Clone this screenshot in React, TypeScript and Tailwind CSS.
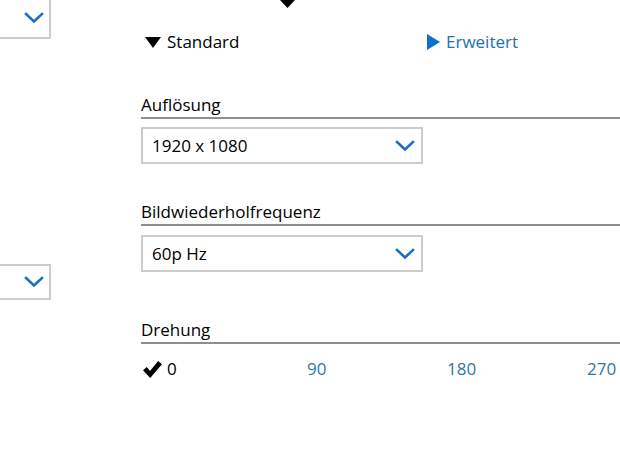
import React from "react";

const Chevron = () => (
  <svg width="20" height="12" viewBox="0 0 20 12" fill="none">
    <path d="M2 2 L10 9.5 L18 2" stroke="#1b6ec2" strokeWidth="2.6" strokeLinecap="square" strokeLinejoin="miter" />
  </svg>
);

const DownTri = ({ w = 16, h = 11, color = "#000" }: { w?: number; h?: number; color?: string }) => (
  <svg width={w} height={h} viewBox={`0 0 ${w} ${h}`}>
    <polygon points={`0,0 ${w},0 ${w / 2},${h}`} fill={color} />
  </svg>
);

const RightTri = () => (
  <svg width="13" height="16" viewBox="0 0 13 16">
    <polygon points="0,0 13,8 0,16" fill="#0b6fcf" />
  </svg>
);

const Check = () => (
  <svg width="19" height="17" viewBox="0 0 19 17">
    <path d="M0 9.2 L3.8 6 L7 10 L15.2 0 L19 3.2 L7.2 17 Z" fill="#000" />
  </svg>
);

const Select = ({ value }: { value: string }) => (
  <div className="flex h-[37px] w-[282px] items-center justify-between border-2 border-[#cccccc] bg-white pl-[9px] pr-[6px] text-[17px] text-black">
    <span>{value}</span>
    <Chevron />
  </div>
);

const Label = ({ text }: { text: string }) => (
  <div className="flex flex-col">
    <div className="h-[23px] text-[17px] leading-[23px] text-black">{text}</div>
    <div className="mt-[1px] h-[2px] w-full bg-[#8e8e8e]" />
  </div>
);

export default function App() {
  return (
    <div
      className="relative flex h-[454px] w-[620px] overflow-hidden bg-white"
      style={{ fontFamily: '"Open Sans", "Noto Sans", sans-serif' }}
    >
      <div className="flex w-[141px] shrink-0 flex-col">
        <div className="mt-[-4px] flex h-[43px] w-[51px] items-center justify-end border-2 border-l-0 border-[#cccccc] pr-[5px]">
          <Chevron />
        </div>
        <div className="mt-[225px] flex h-[36px] w-[51px] items-center justify-end border-2 border-l-0 border-[#cccccc] pr-[5px]">
          <Chevron />
        </div>
      </div>
      <div className="flex min-w-0 flex-1 flex-col">
        <div className="pl-[139px]">
          <DownTri w={15} h={8} />
        </div>
        <div className="mt-[23px] flex h-[22px] items-center text-[17px]">
          <div className="flex w-[286px] items-center">
            <span className="ml-[4px]"><DownTri w={16} h={11} /></span>
            <span className="ml-[6px] text-black">Standard</span>
          </div>
          <div className="flex items-center">
            <RightTri />
            <span className="ml-[6px] text-[#2370ad]">Erweitert</span>
          </div>
        </div>
        <div className="mt-[40px]">
          <Label text="Auflösung" />
        </div>
        <div className="mt-[8px]">
          <Select value="1920 x 1080" />
        </div>
        <div className="mt-[36px]">
          <Label text="Bildwiederholfrequenz" />
        </div>
        <div className="mt-[9px]">
          <Select value="60p Hz" />
        </div>
        <div className="mt-[46px]">
          <Label text="Drehung" />
        </div>
        <div className="mt-[14px] flex text-[17px] leading-[22px]">
          {["0", "90", "180", "270"].map((v, i) => (
            <div key={v} className="flex w-[140px] shrink-0 items-center">
              <div className="flex w-[26px] items-center pl-[2px]">{i === 0 ? <Check /> : null}</div>
              <span className={i === 0 ? "text-black" : "text-[#2f76a8]"}>{v}</span>
            </div>
          ))}
        </div>
      </div>
    </div>
  );
}
